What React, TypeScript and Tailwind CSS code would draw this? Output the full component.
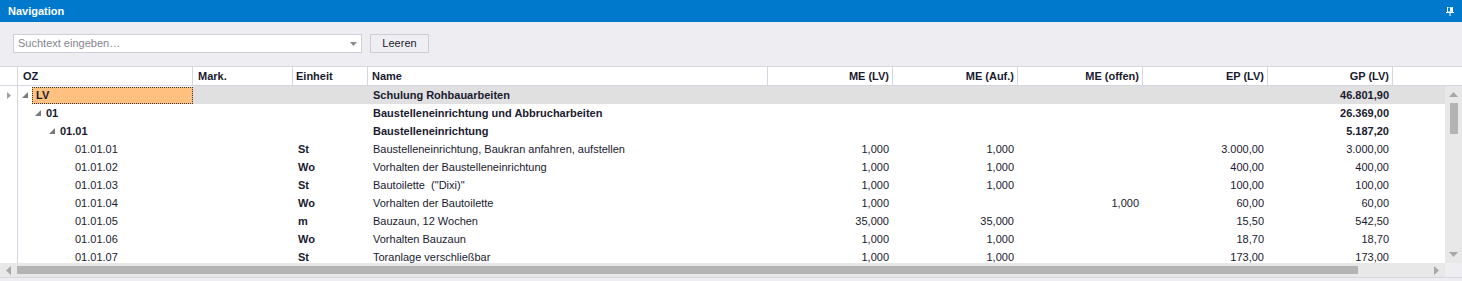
import React from "react";

type Row = {
  oz: string;
  level: number;
  group?: boolean;
  unit?: string;
  name: string;
  meLv?: string;
  meAuf?: string;
  meOffen?: string;
  ep?: string;
  gp?: string;
};

const rows: Row[] = [
  { oz: "LV", level: 0, group: true, name: "Schulung Rohbauarbeiten", gp: "46.801,90" },
  { oz: "01", level: 1, group: true, name: "Baustelleneinrichtung und Abbrucharbeiten", gp: "26.369,00" },
  { oz: "01.01", level: 2, group: true, name: "Baustelleneinrichtung", gp: "5.187,20" },
  { oz: "01.01.01", level: 3, unit: "St", name: "Baustelleneinrichtung, Baukran anfahren, aufstellen", meLv: "1,000", meAuf: "1,000", ep: "3.000,00", gp: "3.000,00" },
  { oz: "01.01.02", level: 3, unit: "Wo", name: "Vorhalten der Baustelleneinrichtung", meLv: "1,000", meAuf: "1,000", ep: "400,00", gp: "400,00" },
  { oz: "01.01.03", level: 3, unit: "St", name: "Bautoilette  (\"Dixi)\"", meLv: "1,000", meAuf: "1,000", ep: "100,00", gp: "100,00" },
  { oz: "01.01.04", level: 3, unit: "Wo", name: "Vorhalten der Bautoilette", meLv: "1,000", meOffen: "1,000", ep: "60,00", gp: "60,00" },
  { oz: "01.01.05", level: 3, unit: "m", name: "Bauzaun, 12 Wochen", meLv: "35,000", meAuf: "35,000", ep: "15,50", gp: "542,50" },
  { oz: "01.01.06", level: 3, unit: "Wo", name: "Vorhalten Bauzaun", meLv: "1,000", meAuf: "1,000", ep: "18,70", gp: "18,70" },
  { oz: "01.01.07", level: 3, unit: "St", name: "Toranlage verschließbar", meLv: "1,000", meAuf: "1,000", ep: "173,00", gp: "173,00" },
];

const cols = "grid grid-cols-[18px_175px_100px_75px_400px_125px_125px_125px_125px_125px_1fr]";

function Expander() {
  return (
    <svg width="6" height="6" viewBox="0 0 6 6" className="shrink-0">
      <polygon points="6,0 6,6 0,6" fill="#7a7a7a" />
    </svg>
  );
}

function Tri({ dir }: { dir: "up" | "down" | "left" | "right" }) {
  const pts = {
    up: "0,5 9,5 4.5,0",
    down: "0,0 9,0 4.5,5",
    left: "5,0 5,9 0,4.5",
    right: "0,0 0,9 5,4.5",
  }[dir];
  const w = dir === "up" || dir === "down" ? 9 : 5;
  const h = dir === "up" || dir === "down" ? 5 : 9;
  return (
    <svg width={w} height={h} viewBox={`0 0 ${w} ${h}`}>
      <polygon points={pts} fill="#a8a8a8" />
    </svg>
  );
}

export default function App() {
  return (
    <div className="w-[1462px] h-[281px] overflow-hidden bg-[#eeeef2] text-[11px] text-[#1a1a30] font-['Liberation_Sans',Arial,sans-serif] flex flex-col">
      {/* title */}
      <div className="h-[22px] bg-[#0079cd] flex items-center justify-between pl-[8px] pr-[8px] shrink-0">
        <span className="text-white font-bold">Navigation</span>
        <svg width="8" height="9" viewBox="0 0 8 9">
          <rect x="1.5" y="0" width="5" height="5" fill="none" stroke="#fff" strokeWidth="1" />
          <rect x="4" y="0.5" width="2" height="4" fill="#fff" />
          <rect x="0" y="5" width="8" height="1" fill="#fff" />
          <rect x="3.5" y="6" width="1" height="3" fill="#fff" />
        </svg>
      </div>

      {/* toolbar */}
      <div className="h-[44px] shrink-0 flex items-start gap-[8px] pl-[13px] pt-[12px]">
        <div className="w-[349px] h-[19px] bg-white border border-[#cfcfda] flex items-center justify-between pl-[4px] pr-[4px]">
          <span className="text-[#858590]">Suchtext eingeben…</span>
          <svg width="7" height="4" viewBox="0 0 7 4">
            <polygon points="0,0 7,0 3.5,4" fill="#8a8a8a" />
          </svg>
        </div>
        <div className="w-[59px] h-[19px] border border-[#cdcdd8] bg-[#efeff3] flex items-center justify-center">
          Leeren
        </div>
      </div>

      {/* header */}
      <div className={`${cols} h-[20px] shrink-0 bg-white border-t border-b border-[#d6d6e2] font-bold`}>
        <div className="border-r border-[#d6d6e2]" />
        <div className="border-r border-[#d6d6e2] pl-[5px] leading-[18px]">OZ</div>
        <div className="border-r border-[#d6d6e2] pl-[5px] leading-[18px]">Mark.</div>
        <div className="border-r border-[#d6d6e2] pl-[3px] leading-[18px]">Einheit</div>
        <div className="border-r border-[#d6d6e2] pl-[4px] leading-[18px]">Name</div>
        <div className="border-r border-[#d6d6e2] pr-[3px] text-right leading-[18px]">ME (LV)</div>
        <div className="border-r border-[#d6d6e2] pr-[3px] text-right leading-[18px]">ME (Auf.)</div>
        <div className="border-r border-[#d6d6e2] pr-[3px] text-right leading-[18px]">ME (offen)</div>
        <div className="border-r border-[#d6d6e2] pr-[3px] text-right leading-[18px]">EP (LV)</div>
        <div className="border-r border-[#d6d6e2] pr-[3px] text-right leading-[18px]">GP (LV)</div>
        <div />
      </div>

      {/* body */}
      <div className="h-[177px] shrink-0 flex bg-white">
        <div className="flex-1 overflow-hidden">
          {rows.map((r, i) => {
            const first = i === 0;
            const band = first ? "bg-[#e0e0e0]" : "";
            return (
              <div
                key={r.oz}
                className={`${cols} h-[18px] leading-[18px] ${r.group ? "font-bold" : ""}`}
              >
                <div className="border-r border-[#d6d6e2] bg-white flex items-center pl-[7px]">
                  {first && (
                    <svg width="4" height="7" viewBox="0 0 4 7">
                      <polygon points="0,0 0,7 4,3.5" fill="#a0a0a0" />
                    </svg>
                  )}
                </div>
                <div className="flex items-center">
                  {r.group ? (
                    <>
                      <div className={`flex items-center ${r.level === 0 ? "pl-[4px]" : r.level === 1 ? "pl-[17px]" : "pl-[31px]"}`}>
                        <Expander />
                      </div>
                      {first ? (
                        <div className="ml-[4px] flex-1 h-[17px] self-start mt-[1px] bg-[#ffc080] border border-dotted border-[#333] pl-[3px] leading-[15px]">
                          {r.oz}
                        </div>
                      ) : (
                        <span className="ml-[5px]">{r.oz}</span>
                      )}
                    </>
                  ) : (
                    <span className="pl-[57px]">{r.oz}</span>
                  )}
                </div>
                <div className={band} />
                <div className={`pl-[5px] font-bold ${band}`}>{r.unit}</div>
                <div className={`pl-[5px] whitespace-pre ${band}`}>{r.name}</div>
                <div className={`pr-[4px] text-right ${band}`}>{r.meLv}</div>
                <div className={`pr-[4px] text-right ${band}`}>{r.meAuf}</div>
                <div className={`pr-[4px] text-right ${band}`}>{r.meOffen}</div>
                <div className={`pr-[4px] text-right ${band}`}>{r.ep}</div>
                <div className={`pr-[4px] text-right ${band}`}>{r.gp}</div>
                <div className={band} />
              </div>
            );
          })}
        </div>
        {/* vertical scrollbar */}
        <div className="w-[17px] bg-[#e8e8e8] flex flex-col items-center">
          <div className="h-[17px] flex items-center justify-center">
            <Tri dir="up" />
          </div>
          <div className="w-[8px] h-[31px] bg-[#b4b4b4]" />
          <div className="flex-1" />
          <div className="h-[17px] flex items-center justify-center">
            <Tri dir="down" />
          </div>
        </div>
      </div>

      {/* horizontal scrollbar */}
      <div className="h-[14px] shrink-0 flex bg-[#e8e8e8]">
        <div className="w-[17px] flex items-center justify-center">
          <Tri dir="left" />
        </div>
        <div className="flex-1 flex items-center pr-[70px]">
          <div className="h-[8px] w-full bg-[#b4b4b4]" />
        </div>
        <div className="w-[17px] flex items-center justify-center">
          <Tri dir="right" />
        </div>
        <div className="w-[17px] bg-[#eeeef2]" />
      </div>
      <div className="flex-1 border-t border-[#d6d6e2]" />
    </div>
  );
}
